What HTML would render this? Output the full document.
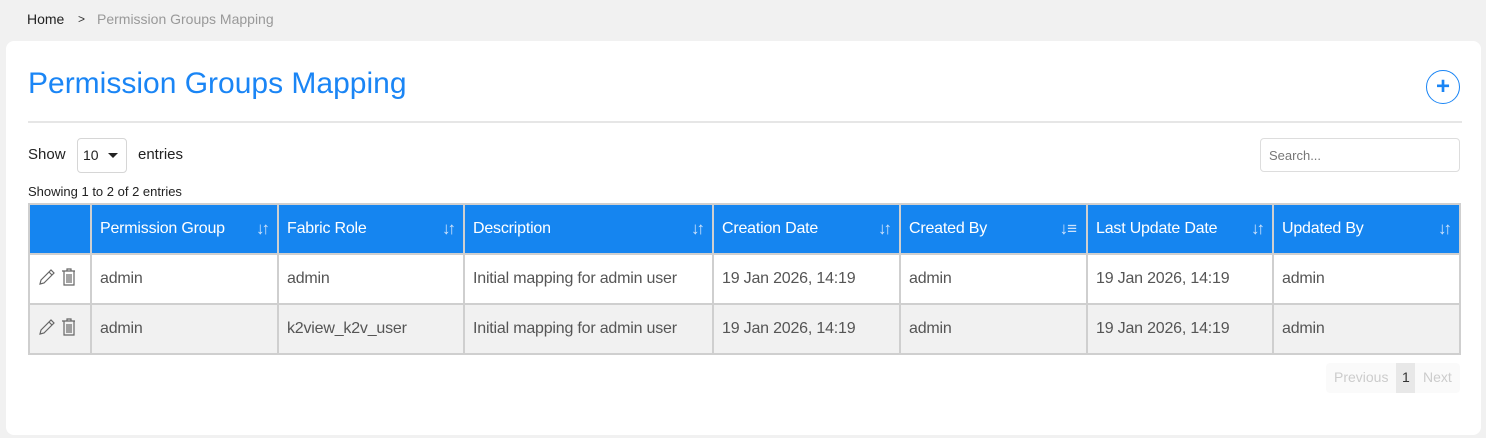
<!DOCTYPE html>
<html><head><style>
body{margin:0;width:1486px;height:438px;background:#f1f1f1;font-family:"Liberation Sans",sans-serif;position:relative;overflow:hidden;color:#333}
.a{position:absolute;white-space:nowrap}
.card{position:absolute;left:6px;top:41px;width:1475px;height:394px;background:#fff;border-radius:8px}
table{position:absolute;left:28px;top:203px;border-collapse:collapse;font-size:16px;letter-spacing:-0.2px}
td,th{border:2px solid #cfcfcf;padding:0 0 0 8px;text-align:left;box-sizing:border-box}
th{background:#1585f0;color:#fff;font-weight:normal;height:50px;position:relative}
td{height:50px;color:#555}
tr.g td{background:#f1f1f1}
.s{position:absolute;right:10px;top:14px;font-size:17px;color:#cfe3fb;letter-spacing:-3px}
</style></head><body>
<div class="a" style="left:27px;top:11px;font-size:14px;color:#222">Home</div>
<div class="a" style="left:78px;top:12px;font-size:12px;color:#333">&gt;</div>
<div class="a" style="left:97px;top:11px;font-size:14px;color:#999">Permission Groups Mapping</div>
<div class="card"></div>
<div class="a" style="left:28px;top:67px;font-size:30px;color:#1a85f5;letter-spacing:0">Permission Groups Mapping</div>
<div class="a" style="left:1426px;top:70px;width:32px;height:32px;border:1.5px solid #1a85f5;border-radius:50%;text-align:center;line-height:31px;font-size:24px;color:#1a85f5;font-weight:bold">+</div>
<div class="a" style="left:28px;top:121px;width:1434px;height:2px;background:#e6e6e6"></div>
<div class="a" style="left:28px;top:146px;font-size:15px;color:#222">Show</div>
<div class="a" style="left:77px;top:138px;width:48px;height:33px;border:1px solid #d6d6d6;border-radius:4px"></div>
<div class="a" style="left:83px;top:147px;font-size:14px;color:#222">10</div>
<div class="a" style="left:108px;top:153px;width:0;height:0;border-left:5px solid transparent;border-right:5px solid transparent;border-top:5px solid #222"></div>
<div class="a" style="left:138px;top:146px;font-size:15px;color:#222">entries</div>
<div class="a" style="left:1260px;top:138px;width:198px;height:32px;border:1px solid #ddd;border-radius:4px"></div>
<div class="a" style="left:1269px;top:148px;font-size:13px;color:#777">Search...</div>
<div class="a" style="left:28px;top:184px;font-size:13px;color:#222">Showing 1 to 2 of 2 entries</div>
<table>
<tr><th style="width:62px"></th>
<th style="width:187px">Permission Group<span class="s">↓↑</span></th>
<th style="width:186px">Fabric Role<span class="s">↓↑</span></th>
<th style="width:249px">Description<span class="s">↓↑</span></th>
<th style="width:187px">Creation Date<span class="s">↓↑</span></th>
<th style="width:187px">Created By<span class="s" style="letter-spacing:-1px">↓≡</span></th>
<th style="width:186px">Last Update Date<span class="s">↓↑</span></th>
<th style="width:187px">Updated By<span class="s">↓↑</span></th></tr>
<tr><td><svg width="44" height="20" viewBox="0 0 44 20"><path d="M2 17l1-4 10-10 3 3-10 10z M11 5l3 3" fill="none" stroke="#666" stroke-width="1.2"/><path d="M24 4h13M29 4v-2h4v2M26 4v14h10V4M29 7v9M31 7v9M33 7v9" fill="none" stroke="#666" stroke-width="1.2"/></svg></td><td>admin</td><td>admin</td><td>Initial mapping for admin user</td><td>19 Jan 2026, 14:19</td><td>admin</td><td>19 Jan 2026, 14:19</td><td>admin</td></tr>
<tr class="g"><td><svg width="44" height="20" viewBox="0 0 44 20"><path d="M2 17l1-4 10-10 3 3-10 10z M11 5l3 3" fill="none" stroke="#666" stroke-width="1.2"/><path d="M24 4h13M29 4v-2h4v2M26 4v14h10V4M29 7v9M31 7v9M33 7v9" fill="none" stroke="#666" stroke-width="1.2"/></svg></td><td>admin</td><td>k2view_k2v_user</td><td>Initial mapping for admin user</td><td>19 Jan 2026, 14:19</td><td>admin</td><td>19 Jan 2026, 14:19</td><td>admin</td></tr>
</table>
<div class="a" style="left:1326px;top:363px;width:134px;height:30px;background:#fafafa;border-radius:4px"></div>
<div class="a" style="left:1334px;top:369px;font-size:14px;color:#ccc">Previous</div>
<div class="a" style="left:1396px;top:363px;width:19px;height:30px;background:#e8e8e8"></div>
<div class="a" style="left:1402px;top:369px;font-size:14px;color:#333">1</div>
<div class="a" style="left:1423px;top:369px;font-size:14px;color:#ccc">Next</div>
</body></html>
